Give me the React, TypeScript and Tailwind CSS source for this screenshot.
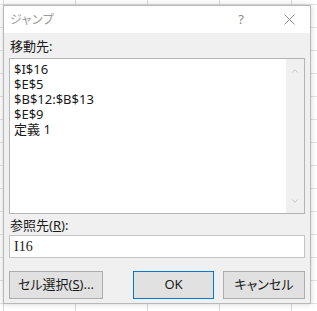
import { ChevronDown, ChevronUp } from "lucide-react";

const targets = ["$I$16", "$E$5", "$B$12:$B$13", "$E$9", "定義 1"];

const font = "font-['Noto_Sans','Noto_Sans_CJK_JP',sans-serif] [font-feature-settings:'palt']";

export default function App() {
  return (
    <div
      className={`w-[317px] h-[311px] overflow-hidden bg-white bg-[linear-gradient(to_right,#dadada_1px,transparent_1px),linear-gradient(to_bottom,#e2e2e2_1px,transparent_1px)] bg-[size:72px_23px] bg-[position:3px_4px] pl-[3px] pt-[5px] ${font}`}
    >
      {/* dialog */}
      <div className="w-[308px] h-[299px] flex flex-col border border-[#b8b8b8] bg-[#f0f0f0] shadow-[0_0_6px_rgba(0,0,0,0.18)]">
        <div className="h-[27px] shrink-0 bg-white flex items-center pl-[6px] pr-[14px] text-[12px] text-[#9a9a9a]">
          <span className="tracking-[0.5px]">ジャンプ</span>
          <span className="ml-auto mr-[40px] text-[13px] text-[#8a8a8a]">?</span>
          <svg width="11" height="11" viewBox="0 0 11 11" className="mr-[1px]">
            <path d="M0.5 0.5 L10.5 10.5 M10.5 0.5 L0.5 10.5" stroke="#8a8a8a" strokeWidth="1" />
          </svg>
        </div>

        <div className="flex flex-col px-[5px] pt-[3px] text-[13px] text-[#1a1a1a]">
          <div className="h-[20px] leading-[20px] pl-[1px]">移動先:</div>
          <div className="mt-[2px] h-[156px] flex border border-[#b4b4b4] bg-white">
            <div className="flex-1 pl-[4px] pt-[3px] leading-[15px]">
              {targets.map((t) => (
                <div key={t} className="h-[15px]">{t}</div>
              ))}
            </div>
            <div className="w-[18px] flex flex-col items-center justify-between bg-[#f0f0f0] py-[7px] text-[#a6a6a6]">
              <ChevronUp size={10} strokeWidth={1.5} />
              <ChevronDown size={10} strokeWidth={1.5} />
            </div>
          </div>

          <div className="mt-[2px] h-[18px] leading-[18px] pl-[1px]">
            参照先(<span className="underline">R</span>):
          </div>
          <div className="mt-[1px] h-[23px] flex items-center border border-[#c4c4c4] bg-white pl-[4px] font-['Liberation_Serif',serif] text-[14px]">
            I16
          </div>

          <div className="mt-[13px] flex gap-[9px]">
            <button className="w-[94px] h-[28px] border border-[#adadad] bg-[#e1e1e1]">
              セル選択(<span className="underline">S</span>)...
            </button>
            <button className="ml-auto w-[81px] h-[28px] border border-[#0078d7] bg-[#e1e1e1]">
              OK
            </button>
            <button className="w-[82px] h-[28px] border border-[#adadad] bg-[#e1e1e1]">
              キャンセル
            </button>
          </div>
        </div>
      </div>
    </div>
  );
}
